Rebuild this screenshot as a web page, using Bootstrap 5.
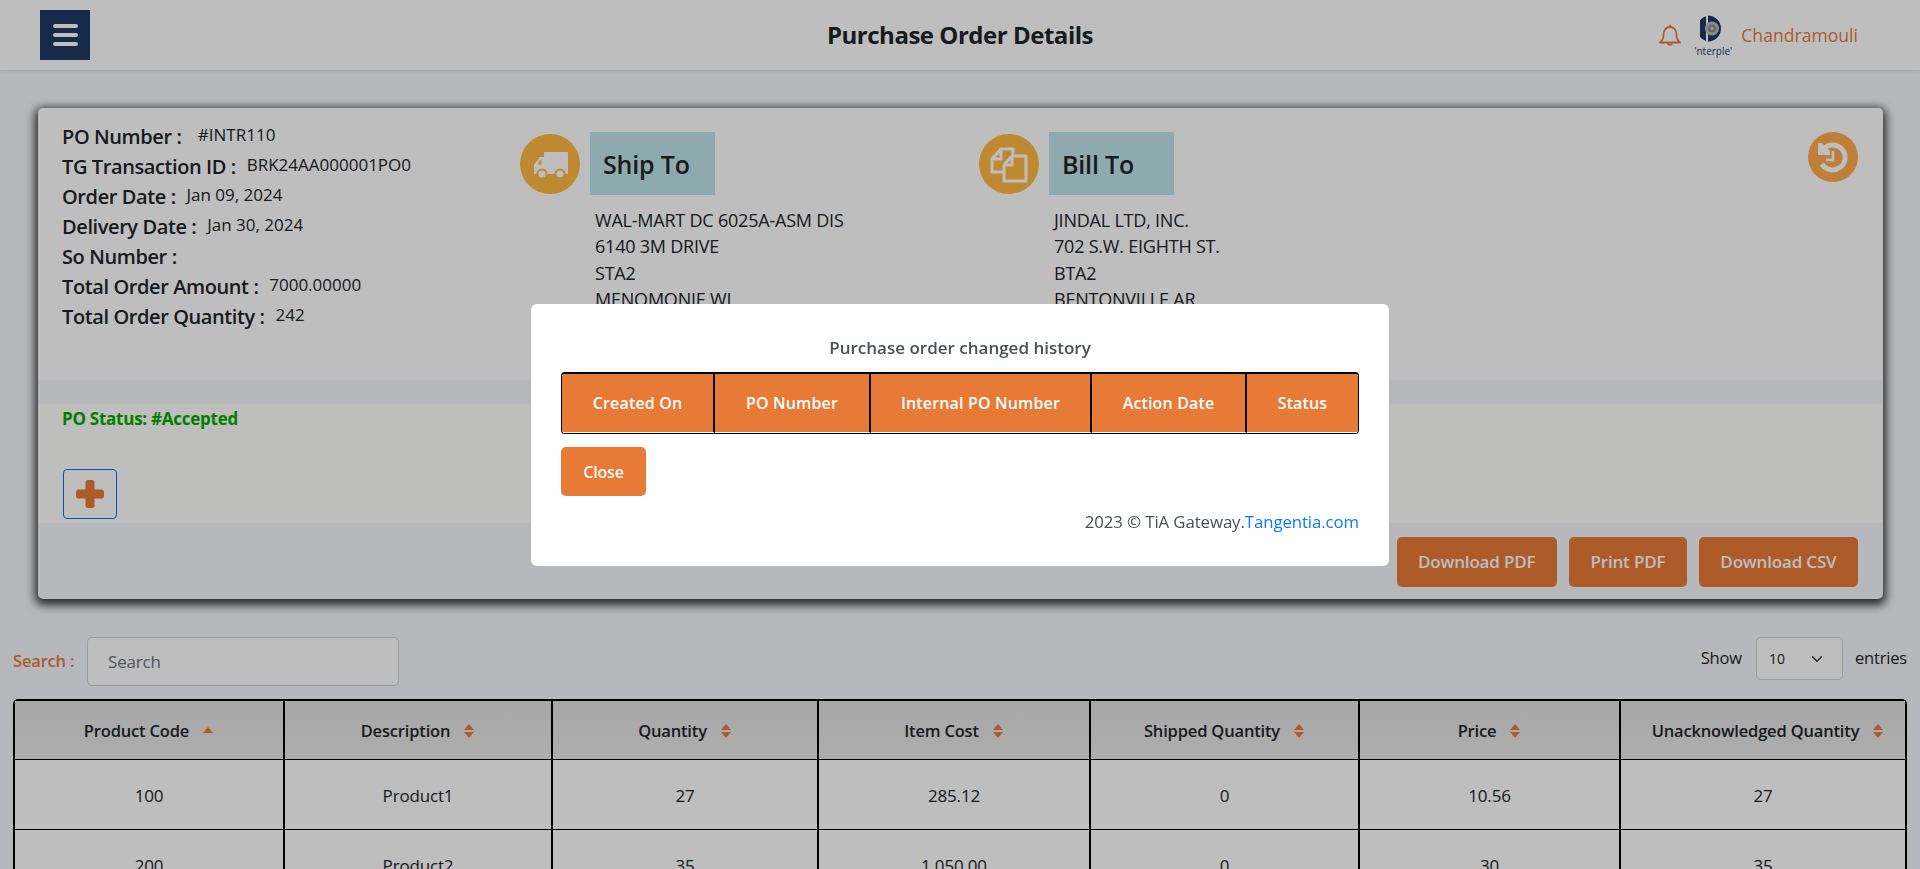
<!DOCTYPE html>
<html lang="en">
<head>
<meta charset="utf-8">
<title>Purchase Order Details</title>
<link rel="stylesheet" href="https://cdn.jsdelivr.net/npm/bootstrap@5.3.0/dist/css/bootstrap.min.css">
<style>
html,body{height:100%;overflow:hidden}
body{background:#f6f7fb;font-family:"Open Sans","Noto Sans",sans-serif;font-size:17px;color:#212529;letter-spacing:-.01em}
.topbar{height:70px;background:#fff;box-shadow:0 1px 3px rgba(0,0,0,.12);padding:0 62px;display:grid;grid-template-columns:1fr auto 1fr;align-items:center}
.menu-btn{width:50px;height:50px;background:#203865;border:0;border-radius:0;padding:0 13px;margin-left:-22px}
.menu-btn span{display:block;height:4px;background:#fff;border-radius:2px;width:25px;margin:5px 0}
.page-title{font-size:24px;font-weight:700;letter-spacing:-.02em}
.user-area{justify-self:end}
.user-name{color:#e87a38;font-size:17.6px;letter-spacing:0;margin-left:8px}
.logo-box{width:40px;margin-left:11px}
.logo-word{font-size:10px;line-height:9px;margin-top:2px;color:#203865;letter-spacing:0;white-space:nowrap}
.po-panel{margin:38px 37px 0 38px;height:491px;background:#f6f7fb;border-radius:5px;box-shadow:0 3px 10px 3px rgba(0,0,0,.78);overflow:hidden}
.po-top{height:272px;background:#fff;padding:13.5px 25px 0 24px}
.po-line{height:30px;line-height:30px;white-space:nowrap}
.po-label{font-size:20px;font-weight:600;letter-spacing:-.02em}
.po-val{font-size:17px;letter-spacing:0;position:relative;top:-3px;margin-left:6.5px}
.po-val-wide{margin-left:12px}
.left-col{width:458px}
.addr-col{width:459px;padding-top:10.5px}
.round-ico{width:60px;height:60px;border-radius:50%;background:#ffb843;flex:none}
.addr-head{width:125px;height:63px;line-height:65px;background:#bfe5ea;font-size:25px;font-weight:600;padding-left:13px;margin-left:10px}
.addr-text{margin:12px 0 0 75px;line-height:26.3px;font-size:18px;letter-spacing:-.012em;white-space:nowrap}
.hist-ico{width:50px;height:50px;border-radius:50%;background:#ffab4d;margin:10.5px 0 0 auto;flex:none}
.status-band{margin-top:24px;height:119px;background:#fffffd;padding:0 25px 0 24px}
.po-status{color:#0a0;font-weight:700;line-height:30px;letter-spacing:-.015em}
.plus-btn{width:54px;height:50px;margin:35px 0 0 1px;border:1px solid #0d6efd;border-radius:4px;background:transparent;padding:0}
.act-btn,.close-btn{background:#e87a38;border:0;color:#fff;font-weight:600;height:50px;border-radius:5px;letter-spacing:-.01em}
.act-btn{font-size:17px;padding:0 21.5px}
.act-row{padding:14px 25px 0 0;gap:12px}
.filter-row{height:100px;padding:25px 13px 0}
.search-lbl{color:#e87a38;font-weight:600;width:74px;font-size:16.5px}
.search-box{width:312px;height:49px;border:1px solid #ced4da;border-radius:5px;background:#fff;padding:0 20px;letter-spacing:-.01em;font-size:17px}
.search-box::placeholder{color:#6c757d}
.right-tools{margin-bottom:6px;font-size:16.5px}
.show-sel{width:87px;height:43px;border:1px solid #ced4da;border-radius:5px;background-color:#fff;background-position:right 17px center;font-size:14px;padding:0 12px;margin:0 12px 0 14px}
.grid-tbl{width:1894px;margin:0 0 0 13px;table-layout:fixed;border-collapse:separate;border-spacing:0;text-align:center;border-top:2px solid #000;border-left:2px solid #000;border-right:2px solid #000;border-radius:5px 5px 0 0}
.grid-tbl th{height:59px;background:linear-gradient(#e2e2e2,#e8e8e8);font-weight:600;font-size:16.5px;border-right:2px solid #000;border-bottom:1px solid #000;padding:2px 0 0;vertical-align:middle;white-space:nowrap}
.grid-tbl td{height:70px;background:#fff;border-right:2px solid #000;border-bottom:1px solid #000;padding:2px 0 0;vertical-align:middle}
.grid-tbl th:last-child,.grid-tbl td:last-child{border-right:0}
.grid-tbl th:last-child{padding-left:10px}
.sort-ico{margin-left:13px;vertical-align:-1px}
.modal-backdrop.show{opacity:.255}
.hist-dialog{max-width:858px}
.hist-content{height:262px;border:0;border-radius:6px;padding:30px}
.hist-title{font-weight:600;color:#495057;text-align:center;line-height:28px;font-size:17px;letter-spacing:0}
.hist-tbl{width:798px;margin-top:10px;table-layout:fixed;border-collapse:separate;border-spacing:0;border:1px solid #000;border-top:2px solid #000;border-radius:4px;text-align:center;overflow:hidden}
.hist-tbl th{height:59px;background:#e87a38;color:#fff;font-weight:600;font-size:16px;letter-spacing:.01em;border-right:2px solid #000;border-bottom:1px solid #fff;padding:0}
.hist-tbl th:last-child{border-right:0}
.close-btn{width:85px;margin-top:13px;padding:2px 0 0;font-size:16px}
.hist-foot{margin-top:12px;text-align:right;color:#495057;line-height:28px;font-size:16.8px;letter-spacing:-.005em}
.hist-foot a{color:#0d7bf5;text-decoration:none}
</style>
</head>
<body>
<header class="topbar position-relative">
  <button class="menu-btn" type="button" aria-label="Menu"><span></span><span></span><span></span></button>
  <div class="page-title text-center">Purchase Order Details</div>
  <div class="user-area d-flex align-items-center">
    <svg width="24" height="24" viewBox="0 0 24 24" fill="none" stroke="#e87a38" stroke-width="1.8" stroke-linejoin="round"><path d="M2 19.500c2-1.600 3.600-3.600 3.600-8C5.600 7 8 4 12 4s6.400 3 6.400 7.500c0 4.400 1.600 6.400 3.600 8z"/><path d="M12 4V1.800"/><path d="M9.800 20.500c.4 1.800 4 1.800 4.400 0"/></svg>
    <div class="logo-box d-flex flex-column align-items-center">
      <svg width="26" height="30" viewBox="0 0 26 30"><path d="M6 1.200A13 13 0 0 0 6 26z" fill="#203865"/><path d="M8 .500a13 13 0 1 1 0 26V29H8z" fill="#203865"/><circle cx="12" cy="13.500" r="7" fill="#bbb"/><circle cx="12" cy="13.500" r="4" fill="#888"/><circle cx="12" cy="13.500" r="1.700" fill="#ccc"/></svg>
      <div class="logo-word">'nterple'</div>
    </div>
    <span class="user-name">Chandramouli</span>
  </div>
</header>

<section class="po-panel">
  <div class="po-top d-flex">
    <div class="left-col">
      <div class="po-line"><span class="po-label">PO Number :</span> <span class="po-val po-val-wide">#INTR110</span></div>
      <div class="po-line"><span class="po-label">TG Transaction ID :</span> <span class="po-val">BRK24AA000001PO0</span></div>
      <div class="po-line"><span class="po-label">Order Date :</span> <span class="po-val">Jan 09, 2024</span></div>
      <div class="po-line"><span class="po-label">Delivery Date :</span> <span class="po-val">Jan 30, 2024</span></div>
      <div class="po-line"><span class="po-label">So Number :</span></div>
      <div class="po-line"><span class="po-label">Total Order Amount :</span> <span class="po-val">7000.00000</span></div>
      <div class="po-line"><span class="po-label">Total Order Quantity :</span> <span class="po-val">242</span></div>
    </div>
    <div class="addr-col">
      <div class="d-flex align-items-center">
        <div class="round-ico">
          <svg width="60" height="60" viewBox="0 0 60 60"><path d="M24 19a1 1 0 0 1 1-1h22a1 1 0 0 1 1 1v21H14v-9l5-7a2 2 0 0 1 1.600-1H24z" fill="#fff"/><path d="M21.500 26h-1l-3 4.500h4z" fill="#ffb843"/><circle cx="22" cy="40" r="5.500" fill="#ffb843"/><circle cx="40" cy="40" r="5.500" fill="#ffb843"/><circle cx="22" cy="40" r="3.600" fill="#fff"/><circle cx="40" cy="40" r="3.600" fill="#fff"/></svg>
        </div>
        <div class="addr-head">Ship To</div>
      </div>
      <div class="addr-text">WAL-MART DC 6025A-ASM DIS<br>6140 3M DRIVE<br>STA2<br>MENOMONIE WI</div>
    </div>
    <div class="addr-col">
      <div class="d-flex align-items-center">
        <div class="round-ico">
          <svg width="60" height="60" viewBox="0 0 60 60" fill="none" stroke="#fff" stroke-width="3" stroke-linejoin="round"><path d="M34 21V15H22l-9 10v13h11"/><path d="M22 15v10h-9"/><path d="M33 22h14v25H25V31z"/><path d="M33 22v9h-8"/></svg>
        </div>
        <div class="addr-head">Bill To</div>
      </div>
      <div class="addr-text">JINDAL LTD, INC.<br>702 S.W. EIGHTH ST.<br>BTA2<br>BENTONVILLE AR</div>
    </div>
    <div class="hist-ico">
      <svg width="50" height="50" viewBox="0 0 50 50" fill="none" stroke="#fff"><path d="M15 17.500A12.500 12.500 0 1 1 14 32" stroke-width="5"/><path d="M10 11h4l8 8v4H10z" fill="#fff" stroke="none"/><path d="M25 19v9h-7" stroke-width="2.600"/></svg>
    </div>
  </div>
  <div class="status-band">
    <div class="po-status">PO Status: #Accepted</div>
    <button class="plus-btn d-flex align-items-center justify-content-center" type="button" aria-label="Add">
      <svg width="28" height="28" viewBox="0 0 28 28" fill="#e87a38"><rect x="9.500" width="9" height="28" rx="2.500"/><rect y="9.500" width="28" height="9" rx="2.500"/></svg>
    </button>
  </div>
  <div class="act-row d-flex justify-content-end">
    <button class="act-btn" type="button">Download PDF</button>
    <button class="act-btn" type="button">Print PDF</button>
    <button class="act-btn" type="button">Download CSV</button>
  </div>
</section>

<div class="filter-row d-flex align-items-center justify-content-between">
  <div class="d-flex align-items-center">
    <label class="search-lbl" for="srch">Search :</label>
    <input id="srch" class="search-box" placeholder="Search">
  </div>
  <div class="right-tools d-flex align-items-center">
    <span>Show</span>
    <select class="show-sel form-select" aria-label="Entries"><option>10</option></select>
    <span>entries</span>
  </div>
</div>

<table class="grid-tbl">
  <colgroup><col style="width:270px"><col style="width:268px"><col style="width:266px"><col style="width:272px"><col style="width:269px"><col style="width:261px"><col></colgroup>
  <thead><tr>
    <th>Product Code<svg class="sort-ico" width="12" height="14" viewBox="0 0 12 14"><path d="M6 3l5 6H1z" fill="#e87a38"/></svg></th>
    <th>Description<svg class="sort-ico" width="12" height="14" viewBox="0 0 12 14"><path d="M6 0l5 6H1zM6 14l5-6H1z" fill="#e87a38"/></svg></th>
    <th>Quantity<svg class="sort-ico" width="12" height="14" viewBox="0 0 12 14"><path d="M6 0l5 6H1zM6 14l5-6H1z" fill="#e87a38"/></svg></th>
    <th>Item Cost<svg class="sort-ico" width="12" height="14" viewBox="0 0 12 14"><path d="M6 0l5 6H1zM6 14l5-6H1z" fill="#e87a38"/></svg></th>
    <th>Shipped Quantity<svg class="sort-ico" width="12" height="14" viewBox="0 0 12 14"><path d="M6 0l5 6H1zM6 14l5-6H1z" fill="#e87a38"/></svg></th>
    <th>Price<svg class="sort-ico" width="12" height="14" viewBox="0 0 12 14"><path d="M6 0l5 6H1zM6 14l5-6H1z" fill="#e87a38"/></svg></th>
    <th>Unacknowledged Quantity<svg class="sort-ico" width="12" height="14" viewBox="0 0 12 14"><path d="M6 0l5 6H1zM6 14l5-6H1z" fill="#e87a38"/></svg></th>
  </tr></thead>
  <tbody>
    <tr><td>100</td><td>Product1</td><td>27</td><td>285.12</td><td>0</td><td>10.56</td><td>27</td></tr>
    <tr><td>200</td><td>Product2</td><td>35</td><td>1,050.00</td><td>0</td><td>30</td><td>35</td></tr>
  </tbody>
</table>

<div class="modal-backdrop fade show"></div>
<div class="modal fade show d-block" tabindex="-1" role="dialog" aria-modal="true">
  <div class="modal-dialog modal-dialog-centered hist-dialog">
    <div class="modal-content hist-content">
      <div class="hist-title">Purchase order changed history</div>
      <table class="hist-tbl">
        <colgroup><col style="width:153px"><col style="width:156px"><col style="width:221px"><col style="width:155px"><col></colgroup>
        <thead><tr><th>Created On</th><th>PO Number</th><th>Internal PO Number</th><th>Action Date</th><th>Status</th></tr></thead>
      </table>
      <button class="close-btn" type="button">Close</button>
      <div class="hist-foot">2023 © TiA Gateway.<a href="#">Tangentia.com</a></div>
    </div>
  </div>
</div>
<script src="https://cdn.jsdelivr.net/npm/bootstrap@5.3.0/dist/js/bootstrap.bundle.min.js"></script>
</body>
</html>
